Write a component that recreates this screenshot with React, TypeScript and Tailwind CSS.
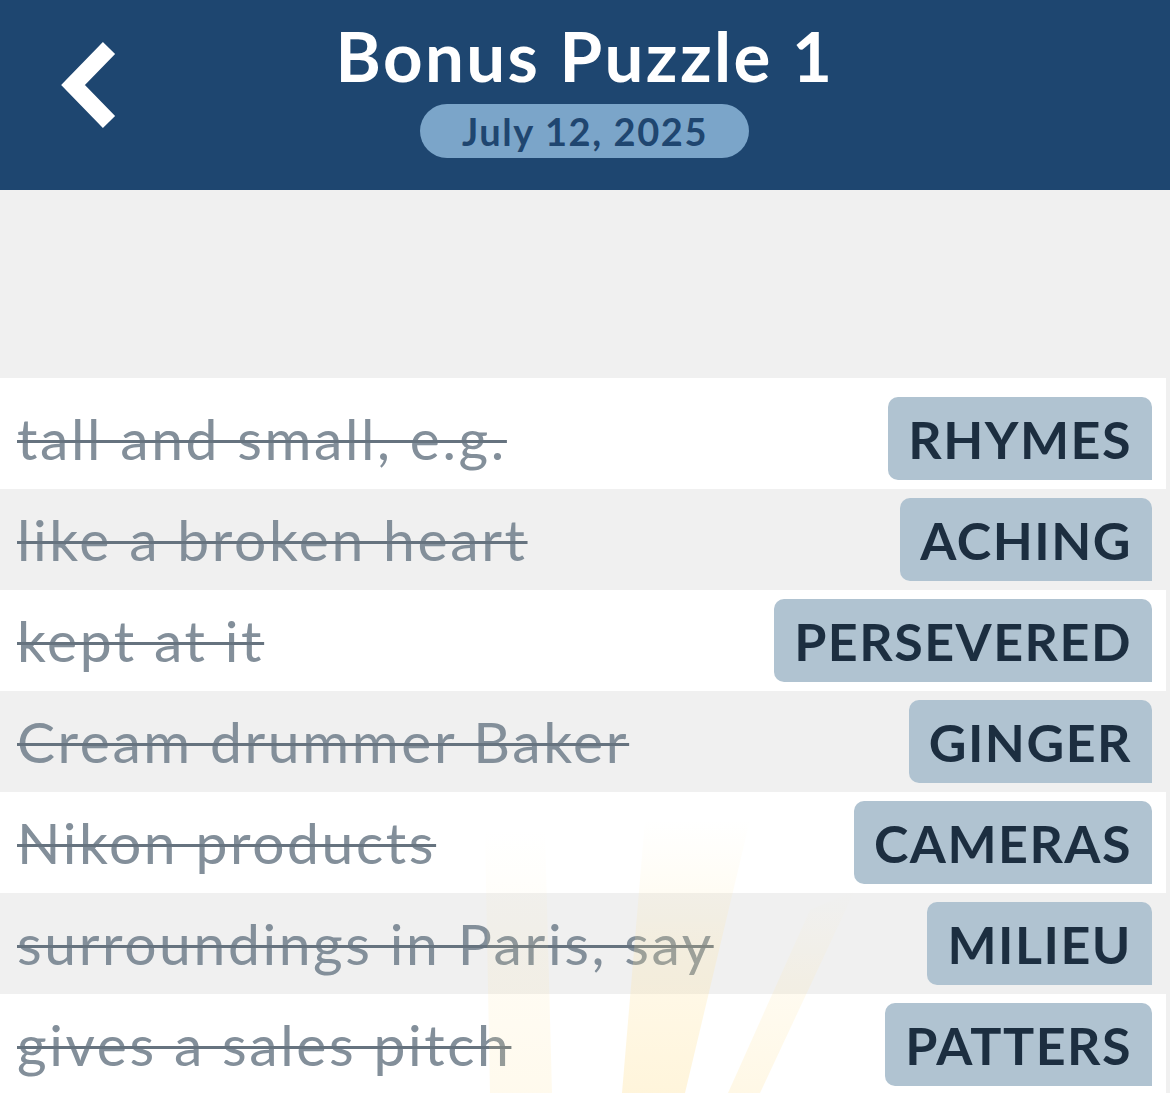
import React from "react";

const rows = [
  { clue: "tall and small, e.g.", answer: "RHYMES" },
  { clue: "like a broken heart", answer: "ACHING" },
  { clue: "kept at it", answer: "PERSEVERED" },
  { clue: "Cream drummer Baker", answer: "GINGER" },
  { clue: "Nikon products", answer: "CAMERAS" },
  { clue: "surroundings in Paris, say", answer: "MILIEU" },
  { clue: "gives a sales pitch", answer: "PATTERS" },
];

export default function App() {
  return (
    <div className="relative w-[1170px] h-[1093px] overflow-hidden bg-[#f0f0f0] font-['Lato','Noto_Sans',sans-serif]">
      <header className="h-[190px] bg-[#1e4670] grid grid-cols-[1fr_auto_1fr]">
        <div className="pl-[40px] pt-[30px]">
          <svg width="100" height="110" viewBox="0 0 100 110">
            <path d="M69 18 L33 55 L69 92" fill="none" stroke="white" strokeWidth="17" strokeLinecap="butt" strokeLinejoin="miter" />
          </svg>
        </div>
        <div className="flex flex-col items-center pt-[18px]">
          <h1 className="text-[69px] leading-[76px] font-bold text-white tracking-[2.4px]">Bonus Puzzle 1</h1>
          <div className="mt-[10px] h-[54px] w-[329px] rounded-full bg-[#7ba5c9] flex items-center justify-center text-[38px] font-bold text-[#1f4670] tracking-[1.6px]">
            July 12, 2025
          </div>
        </div>
        <div />
      </header>
      <div className="h-[188px]" />
      <div className="bg-white pt-[10px] w-[1166px]">
        {rows.map((r, i) => (
          <div
            key={i}
            className={`h-[101px] flex items-center justify-between pl-[17px] pr-[14px] ${i % 2 === 1 ? "bg-[#f0f0f0]" : "bg-white"}`}
          >
            <span className="text-[57px] text-[#838f9a] line-through decoration-[#66737f] decoration-[2.5px] tracking-[2.6px] whitespace-nowrap">
              {r.clue}
            </span>
            <span className="h-[83px] px-[20px] flex items-center rounded-tl-[10px] rounded-tr-[10px] rounded-bl-[10px] bg-[#b0c3d1] text-[52px] font-bold text-[#1c2e40] tracking-[1.5px]">
              {r.answer}
            </span>
          </div>
        ))}
      </div>
      <svg className="absolute left-0 top-[790px] pointer-events-none" width="1170" height="303" viewBox="0 0 1170 303">
        <defs>
          <linearGradient id="ray" x1="0" y1="0" x2="0" y2="1">
            <stop offset="0" stopColor="#ffe9a8" stopOpacity="0" />
            <stop offset="0.45" stopColor="#ffe39a" stopOpacity="0.2" />
            <stop offset="1" stopColor="#ffdf8f" stopOpacity="0.32" />
          </linearGradient>
        </defs>
        <polygon points="485,40 545,40 552,303 490,303" fill="url(#ray)" opacity="0.5" />
        <polygon points="645,30 750,30 685,303 622,303" fill="url(#ray)" />
        <polygon points="810,120 855,100 760,303 728,303" fill="url(#ray)" opacity="0.7" />
      </svg>
    </div>
  );
}
